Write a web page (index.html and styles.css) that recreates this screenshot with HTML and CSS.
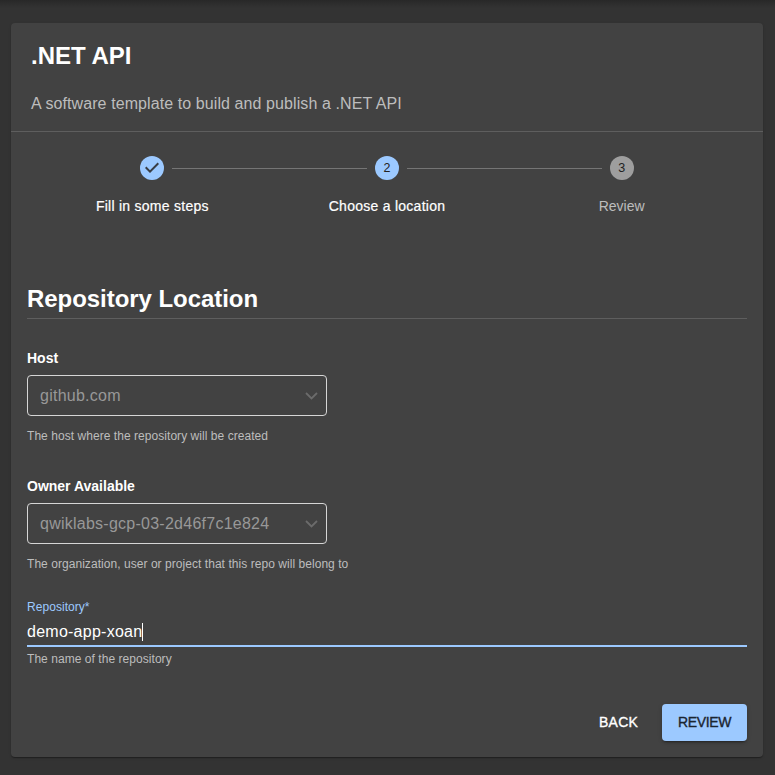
FILE: index.html
```html
<!DOCTYPE html>
<html lang="en">
<head>
<meta charset="utf-8">
<title>.NET API</title>
<link rel="stylesheet" href="styles.css">
</head>
<body>
<main class="card">
  <header class="card-header">
    <h1>.NET API</h1>
    <p>A software template to build and publish a .NET API</p>
  </header>
  <ol class="stepper">
    <li class="step">
      <span class="step-icon"><svg viewBox="0 0 24 24"><path d="M10 17l-5-5 1.4-1.4 3.6 3.6 7.6-7.6L19 8z"/></svg></span>
      <span class="step-label">Fill in some steps</span>
    </li>
    <li class="step">
      <span class="step-icon">2</span>
      <span class="step-label">Choose a location</span>
    </li>
    <li class="step pending">
      <span class="step-icon">3</span>
      <span class="step-label">Review</span>
    </li>
  </ol>
  <form class="form">
    <h2>Repository Location</h2>
    <div class="field">
      <div class="label">Host</div>
      <div class="select"><span>github.com</span><svg viewBox="0 0 13 8"><path d="M1 1l5.5 5.5L12 1"/></svg></div>
      <div class="help">The host where the repository will be created</div>
    </div>
    <div class="field">
      <div class="label">Owner Available</div>
      <div class="select"><span>qwiklabs-gcp-03-2d46f7c1e824</span><svg viewBox="0 0 13 8"><path d="M1 1l5.5 5.5L12 1"/></svg></div>
      <div class="help">The organization, user or project that this repo will belong to</div>
    </div>
    <div class="repo">
      <div class="repo-label">Repository<span>*</span></div>
      <div class="input"><span>demo-app-xoan</span><i class="caret"></i></div>
      <div class="repo-help">The name of the repository</div>
    </div>
    <div class="actions">
      <button type="button" class="btn">BACK</button>
      <button type="button" class="btn primary">REVIEW</button>
    </div>
  </form>
</main>
</body>
</html>
```
FILE: styles.css
```css
* { box-sizing: border-box; }
body { margin: 0; height: 775px; padding: 23px 12px 0 11px; background: linear-gradient(#282828, #333 8px) #333; color: #fff; font-family: "Liberation Sans", sans-serif; overflow: hidden; }
.card { height: 734px; background: #424242; border-radius: 4px; box-shadow: 0 2px 1px -1px rgba(0,0,0,.2), 0 1px 1px rgba(0,0,0,.14), 0 1px 3px rgba(0,0,0,.12); }
.card-header { height: 109px; padding: 18px 20px 0; border-bottom: 1px solid #5e5e5e; }
h1, h2, p { margin: 0; }
h1 { font-size: 24px; line-height: 30px; }
p { margin-top: 23px; font-size: 16px; line-height: 20px; letter-spacing: .09px; color: #bdbdbd; }
.stepper { display: flex; list-style: none; margin: 0; padding: 24px 24px 0; height: 152px; }
.step { position: relative; flex: 1; display: flex; flex-direction: column; align-items: center; }
.step + .step::before { content: ""; position: absolute; top: 12px; left: calc(-50% + 20px); right: calc(50% + 20px); height: 1px; background: #757575; }
.step-icon { width: 24px; height: 24px; border-radius: 50%; background: #9cc9ff; color: #222; font-size: 12.5px; line-height: 24px; text-align: center; }
.step-icon svg { display: block; width: 24px; height: 24px; fill: #383d45; }
.pending .step-icon { background: #9e9e9e; }
.step-label { margin-top: 16px; font-size: 14px; line-height: 20px; letter-spacing: .26px; -webkit-text-stroke: .2px currentColor; white-space: nowrap; }
.pending .step-label { color: #bdbdbd; letter-spacing: 0; -webkit-text-stroke: 0; }
.form { padding: 0 16px; }
h2 { height: 35px; font-size: 24px; line-height: 30px; letter-spacing: -.05px; border-bottom: 1px solid #5e5e5e; }
.field { height: 128px; padding-top: 29px; }
.label { font-size: 14px; line-height: 20px; font-weight: bold; }
.select { display: flex; align-items: center; justify-content: space-between; width: 300px; height: 41px; margin-top: 7px; padding: 0 8px 0 12px; border: 1px solid #d6d6d6; border-radius: 4px; color: #989898; font-size: 16px; letter-spacing: .25px; }
.select svg { width: 13px; height: 8px; fill: none; stroke: #6b6b6b; stroke-width: 1.8; }
.help, .repo-help { font-size: 12px; line-height: 16px; letter-spacing: .05px; color: #bdbdbd; white-space: nowrap; }
.help { margin-top: 12px; }
.repo { padding-top: 24px; }
.repo-label { height: 16px; font-size: 12px; line-height: 16px; letter-spacing: .05px; color: #9cc9ff; }
.input { display: flex; align-items: center; height: 32px; padding-top: 3px; border-bottom: 2px solid #9cc9ff; font-size: 16px; letter-spacing: .25px; }
.caret { width: 1px; height: 18px; background: #fff; }
.repo-help { margin-top: 4px; }
.actions { display: flex; justify-content: flex-end; gap: 8px; margin-top: 37px; }
.btn { height: 37px; padding: 0 16px 1px; border: 0; border-radius: 4px; background: none; color: #fff; font: 14px "Liberation Sans", sans-serif; letter-spacing: .2px; -webkit-text-stroke: .35px currentColor; }
.primary { width: 85px; padding: 0 0 1px; letter-spacing: -.35px; background: #9cc9ff; color: #1b2530; box-shadow: 0 3px 1px -2px rgba(0,0,0,.2), 0 2px 2px rgba(0,0,0,.14), 0 1px 5px rgba(0,0,0,.12); }
```
